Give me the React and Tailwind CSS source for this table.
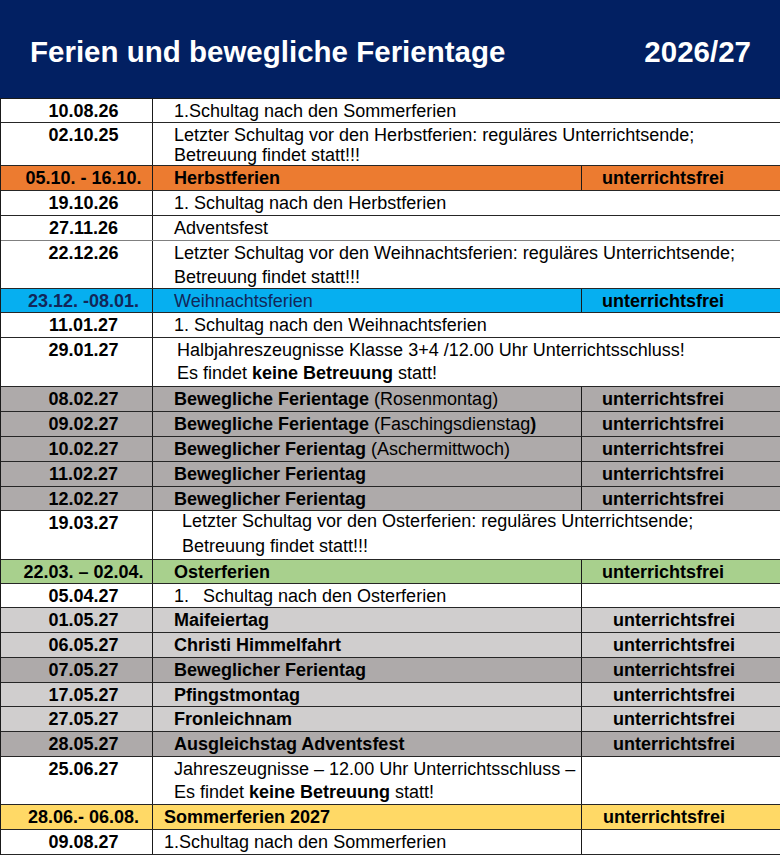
import React from 'react';

// one line of the calendar table
const Row = ({
  h,
  bg = 'bg-white',
  ink = 'text-black',
  line = 'border-[#262626]',
  date,
  children,
  free,
  multi = false,
  lead = 'leading-[24px]',
  pt = 'pt-0',
  pad = 'pl-[21px]',
  freePad = 'pl-[20px]',
  split = false,
}) => {
  const align = multi ? `items-start ${pt}` : 'items-center';
  return (
    <div className={`flex ${h} ${bg} ${ink} border-b ${line} ${lead}`}>
      <div className={`w-[152px] shrink-0 border-r border-[#1a1a1a] pl-[14px] flex justify-center font-bold ${align}`}>
        {date}
      </div>
      {split || free ? (
        <>
          <div className={`w-[429px] shrink-0 border-r border-[#1a1a1a] flex flex-col justify-center ${pad} ${multi ? `justify-start ${pt}` : ''}`}>
            {children}
          </div>
          <div className={`flex-1 flex items-center font-bold ${freePad}`}>{free}</div>
        </>
      ) : (
        <div className={`flex-1 flex flex-col ${pad} ${multi ? pt : 'justify-center'}`}>{children}</div>
      )}
    </div>
  );
};

const App = () => {
  return (
    <div className="w-[780px] h-[855px] overflow-hidden bg-white font-['Liberation_Sans',Arial,sans-serif] text-[18px] text-black">
      <header className="h-[99px] bg-[#022062] border-b border-[#1a1a1a] flex items-center justify-between pt-[6px] pl-[30px] pr-[29px] text-white font-bold text-[29.5px] leading-none">
        <h1>Ferien und bewegliche Ferientage</h1>
        <span>2026/27</span>
      </header>

      <div className="border-l border-[#1a1a1a]">
        <Row h="h-[24px]" date="10.08.26">
          <span>1.Schultag nach den Sommerferien</span>
        </Row>
        <Row h="h-[43px]" date="02.10.25" multi lead="leading-[20px]" pt="pt-[2px]">
          <span>Letzter Schultag vor den Herbstferien: reguläres Unterrichtsende;</span>
          <span>Betreuung findet statt!!!</span>
        </Row>
        <Row h="h-[25px]" bg="bg-[#ec7b30]" free="unterrichtsfrei" date="05.10. - 16.10.">
          <span className="font-bold">Herbstferien</span>
        </Row>
        <Row h="h-[25px]" date="19.10.26">
          <span>1. Schultag nach den Herbstferien</span>
        </Row>
        <Row h="h-[25px]" date="27.11.26" line="border-[#808080]">
          <span>Adventsfest</span>
        </Row>
        <Row h="h-[48px]" date="22.12.26" multi>
          <span>Letzter Schultag vor den Weihnachtsferien: reguläres Unterrichtsende;</span>
          <span>Betreuung findet statt!!!</span>
        </Row>
        <Row h="h-[24px]" bg="bg-[#06aff0]" ink="text-[#12275a]" free={<span className="text-black">unterrichtsfrei</span>} date="23.12. -08.01.">
          <span>Weihnachtsferien</span>
        </Row>
        <Row h="h-[25px]" date="11.01.27">
          <span>1. Schultag nach den Weihnachtsferien</span>
        </Row>
        <Row h="h-[49px]" date="29.01.27" multi lead="leading-[23px]" pt="pt-[1px]" pad="pl-[24px]">
          <span>Halbjahreszeugnisse Klasse 3+4 /12.00 Uhr Unterrichtsschluss!</span>
          <span>
            Es findet <b>keine Betreuung</b> statt!
          </span>
        </Row>
        <Row h="h-[25px]" bg="bg-[#aeaaaa]" free="unterrichtsfrei" date="08.02.27">
          <span>
            <b>Bewegliche Ferientage</b> (Rosenmontag)
          </span>
        </Row>
        <Row h="h-[25px]" bg="bg-[#aeaaaa]" free="unterrichtsfrei" date="09.02.27">
          <span>
            <b>Bewegliche Ferientage</b> (Faschingsdienstag<b>)</b>
          </span>
        </Row>
        <Row h="h-[25px]" bg="bg-[#aeaaaa]" free="unterrichtsfrei" date="10.02.27">
          <span>
            <b>Beweglicher Ferientag</b> (Aschermittwoch)
          </span>
        </Row>
        <Row h="h-[25px]" bg="bg-[#aeaaaa]" free="unterrichtsfrei" date="11.02.27">
          <b>Beweglicher Ferientag</b>
        </Row>
        <Row h="h-[24px]" bg="bg-[#aeaaaa]" free="unterrichtsfrei" date="12.02.27">
          <b>Beweglicher Ferientag</b>
        </Row>
        <Row h="h-[49px]" date="19.03.27" multi lead="leading-[25px]" pad="pl-[29px]">
          <span className="-mt-[2px]">Letzter Schultag vor den Osterferien: reguläres Unterrichtsende;</span>
          <span>Betreuung findet statt!!!</span>
        </Row>
        <Row h="h-[24px]" bg="bg-[#a8d08d]" free="unterrichtsfrei" date="22.03. – 02.04.">
          <b>Osterferien</b>
        </Row>
        <Row h="h-[24px]" date="05.04.27" split>
          <span className="flex">
            <span className="w-[29px]">1.</span>
            <span>Schultag nach den Osterferien</span>
          </span>
        </Row>
        <Row h="h-[25px]" bg="bg-[#d0cece]" free="unterrichtsfrei" freePad="pl-[31px]" date="01.05.27">
          <b>Maifeiertag</b>
        </Row>
        <Row h="h-[25px]" bg="bg-[#d0cece]" free="unterrichtsfrei" freePad="pl-[31px]" date="06.05.27">
          <b>Christi Himmelfahrt</b>
        </Row>
        <Row h="h-[25px]" bg="bg-[#aeaaaa]" free="unterrichtsfrei" freePad="pl-[31px]" date="07.05.27">
          <b>Beweglicher Ferientag</b>
        </Row>
        <Row h="h-[24px]" bg="bg-[#d0cece]" free="unterrichtsfrei" freePad="pl-[31px]" date="17.05.27">
          <b>Pfingstmontag</b>
        </Row>
        <Row h="h-[25px]" bg="bg-[#d0cece]" free="unterrichtsfrei" freePad="pl-[31px]" date="27.05.27">
          <b>Fronleichnam</b>
        </Row>
        <Row h="h-[25px]" bg="bg-[#aeaaaa]" free="unterrichtsfrei" freePad="pl-[31px]" date="28.05.27">
          <b>Ausgleichstag Adventsfest</b>
        </Row>
        <Row h="h-[48px]" date="25.06.27" multi split lead="leading-[23px]" pt="pt-[1px]">
          <span>Jahreszeugnisse – 12.00 Uhr Unterrichtsschluss –</span>
          <span>
            Es findet <b>keine Betreuung</b> statt!
          </span>
        </Row>
        <Row h="h-[25px]" bg="bg-[#ffd966]" free="unterrichtsfrei" freePad="pl-[21px]" pad="pl-[11px]" date="28.06.- 06.08.">
          <b>Sommerferien 2027</b>
        </Row>
        <Row h="h-[25px]" date="09.08.27" split pad="pl-[11px]">
          <span>1.Schultag nach den Sommerferien</span>
        </Row>
      </div>
    </div>
  );
};

export default App;
